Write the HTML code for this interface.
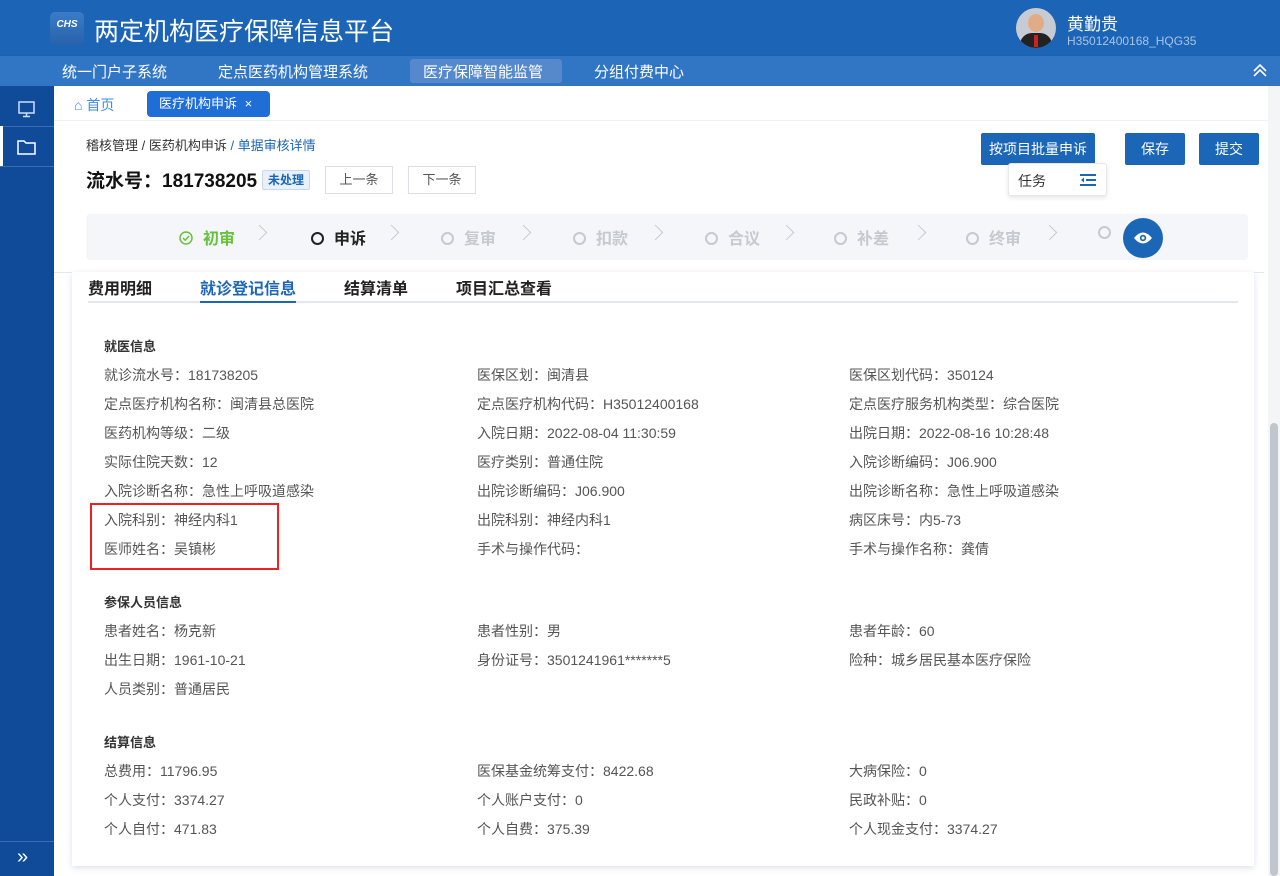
<!DOCTYPE html>
<html><head><meta charset="utf-8"><style>
*{margin:0;padding:0;box-sizing:border-box}
body{width:1280px;height:876px;overflow:hidden;font-family:"Liberation Sans","Noto Sans CJK SC",sans-serif;background:#fff;position:relative;color:#333}
.abs{position:absolute}
.hdr{left:0;top:0;width:1280px;height:56px;background:#1b64b6}
.nav{left:0;top:56px;width:1280px;height:30px;background:#3176c4;box-shadow:0 2px 3px rgba(0,0,0,.2)}
.nav span{position:absolute;top:5px;font-size:15px;color:#fff}
.side{left:0;top:86px;width:54px;height:790px;background:#0f4b98}
.tabs{left:54px;top:86px;width:1214px;height:35px;background:#fff;border-bottom:1px solid #eef0f4}
.btn{position:absolute;background:#1c66b8;color:#fff;font-size:14px;text-align:center;line-height:32px;height:32px;border-radius:2px}
.wb{position:absolute;border:1px solid #dcdfe6;font-size:13px;color:#555;text-align:center;height:28px;line-height:26px;width:68px;background:#fff}
.steps{left:86px;top:214px;width:1162px;height:46px;background:#f4f6fa;border-radius:4px}
.st{position:absolute;top:11px;font-size:16px;font-weight:bold;color:#c6c9cf}
.st i{display:inline-block;width:13px;height:13px;border:2px solid #c6c9cf;border-radius:50%;margin-right:10px;vertical-align:-1px}
.ch{position:absolute;top:13px;width:11px;height:11px;border-top:1px solid #c6c9cf;border-right:1px solid #c6c9cf;transform:rotate(45deg)}
.card{left:72px;top:272px;width:1182px;height:594px;background:#fff;box-shadow:0 2px 6px rgba(60,90,150,.18)}
.f{position:absolute;font-size:14px;color:#555;white-space:nowrap}
.h{position:absolute;font-size:13px;font-weight:bold;color:#333}
</style></head><body>
<div class="abs hdr">
 <div class="abs" style="left:50px;top:12px;width:34px;height:33px;border-radius:5px;background:linear-gradient(#3a7cc8,#2862aa);color:#fff;font-size:10px;font-weight:bold;font-style:italic;text-align:center;line-height:26px">CHS</div>
 <div class="abs" style="left:94px;top:12px;font-size:25px;color:#fff">两定机构医疗保障信息平台</div>
 <div class="abs" style="left:1016px;top:8px;width:40px;height:40px;border-radius:50%;background:#c8ccd2;overflow:hidden">
  <div class="abs" style="left:12px;top:6px;width:16px;height:18px;border-radius:50%;background:#e0ac86"></div>
  <div class="abs" style="left:4px;top:25px;width:32px;height:20px;border-radius:12px 12px 0 0;background:#222"></div>
  <div class="abs" style="left:18px;top:27px;width:4px;height:12px;background:#c22"></div>
 </div>
 <div class="abs" style="left:1067px;top:10px;font-size:17px;color:#fff">黄勤贵</div>
 <div class="abs" style="left:1067px;top:34px;font-size:12px;color:#a9c3e6">H35012400168_HQG35</div>
</div>
<div class="abs nav">
 <span style="left:62px">统一门户子系统</span>
 <span style="left:218px">定点医药机构管理系统</span>
 <div class="abs" style="left:410px;top:3px;width:152px;height:24px;background:#5589cc;border-radius:3px"></div>
 <span style="left:423px">医疗保障智能监管</span>
 <span style="left:594px">分组付费中心</span>
 <svg class="abs" style="left:1252px;top:6px" width="16" height="16" viewBox="0 0 16 16"><path d="M2 9 8 3 14 9M2 14 8 8 14 14" stroke="#fff" stroke-width="1.6" fill="none"/></svg>
</div>
<div class="abs side">
 <svg class="abs" style="left:17px;top:14px" width="20" height="18" viewBox="0 0 20 18"><rect x="2" y="2" width="15" height="11" stroke="#cfe0f5" stroke-width="1.5" fill="none"/><path d="M9.5 13v3M6 16.5h7" stroke="#cfe0f5" stroke-width="1.5"/></svg>
 <div class="abs" style="left:0;top:40px;width:54px;height:1px;background:#3b6cb0"></div>
 <div class="abs" style="left:0;top:40px;width:3px;height:40px;background:#fff"></div>
 <svg class="abs" style="left:17px;top:53px" width="20" height="16" viewBox="0 0 20 16"><path d="M1 2h6l2 2h9v11H1z" stroke="#fff" stroke-width="1.5" fill="none"/></svg>
 <div class="abs" style="left:0;top:80px;width:54px;height:1px;background:#3b6cb0"></div>
 <div class="abs" style="left:0;top:755px;width:54px;height:1px;background:#3b6cb0"></div>
 <div class="abs" style="left:17px;top:760px;color:#fff;font-size:20px">»</div>
</div>
<div class="abs tabs">
 <div class="abs" style="left:20px;top:9px;font-size:14px;color:#3a8ee6">⌂ 首页</div>
 <div class="abs" style="left:93px;top:5px;width:123px;height:26px;background:#1f6ed8;border-radius:4px;color:#fff;font-size:13px;line-height:26px;padding-left:12px">医疗机构申诉 <span style="margin-left:4px">×</span></div>
</div>
<div class="abs" style="left:54px;top:121px;width:1214px;height:755px;background:#fff"></div>
<div class="abs" style="left:86px;top:135px;font-size:13px;color:#333">稽核管理 / 医药机构申诉 <span style="color:#1c66b8">/ 单据审核详情</span></div>
<div class="abs" style="left:86px;top:166px;font-size:19px;font-weight:bold;color:#111">流水号：181738205</div>
<div class="abs" style="left:262px;top:170px;width:48px;height:20px;background:#e8f0fa;border:1px solid #c8d9ef;border-radius:2px;font-size:12px;font-weight:bold;color:#1c66b8;text-align:center;line-height:18px">未处理</div>
<div class="wb" style="left:325px;top:166px">上一条</div>
<div class="wb" style="left:408px;top:166px">下一条</div>
<div class="btn" style="left:981px;top:133px;width:114px">按项目批量申诉</div>
<div class="btn" style="left:1125px;top:133px;width:60px">保存</div>
<div class="btn" style="left:1199px;top:133px;width:60px">提交</div>
<div class="abs" style="left:1008px;top:163px;width:99px;height:33px;background:#fff;border:1px solid #e6e8ec;border-radius:3px;box-shadow:0 2px 5px rgba(0,0,0,.1)">
 <span class="abs" style="left:9px;top:7px;font-size:14px;color:#333">任务</span>
 <svg class="abs" style="left:71px;top:10px" width="16" height="12" viewBox="0 0 16 12"><path d="M0 1h16M6 6h10M0 11h16" stroke="#1c66b8" stroke-width="2"/><path d="M4 3.5 1 6l3 2.5z" fill="#1c66b8"/></svg>
</div>
<div class="abs steps">
 <div class="st" style="left:93px;color:#67c23a"><svg width="14" height="14" viewBox="0 0 14 14" style="margin-right:10px;vertical-align:-1px"><circle cx="7" cy="7" r="6" stroke="#67c23a" stroke-width="1.5" fill="none"/><path d="M4 7l2.2 2.2L10 5" stroke="#67c23a" stroke-width="1.5" fill="none"/></svg>初审</div>
 <div class="ch" style="left:168px"></div>
 <div class="st" style="left:225px;color:#222"><i style="border-color:#222"></i>申诉</div>
 <div class="ch" style="left:300px"></div>
 <div class="st" style="left:355px"><i></i>复审</div>
 <div class="ch" style="left:432px"></div>
 <div class="st" style="left:487px"><i></i>扣款</div>
 <div class="ch" style="left:564px"></div>
 <div class="st" style="left:619px"><i></i>合议</div>
 <div class="ch" style="left:695px"></div>
 <div class="st" style="left:748px"><i></i>补差</div>
 <div class="ch" style="left:827px"></div>
 <div class="st" style="left:880px"><i></i>终审</div>
 <div class="ch" style="left:958px"></div>
 <div class="st" style="left:1012px"><i></i></div>
 <div class="abs" style="left:1037px;top:4px;width:40px;height:40px;border-radius:50%;background:#1c66b8">
  <svg class="abs" style="left:10px;top:12px" width="20" height="16" viewBox="0 0 20 16"><path d="M1 8Q10-3 19 8Q10 19 1 8z" fill="#fff"/><circle cx="10" cy="8" r="3.2" fill="#1c66b8"/><circle cx="10" cy="8" r="1.5" fill="#fff"/></svg>
 </div>
</div>
<div class="abs" style="left:54px;top:272px;width:1210px;height:1px;background:#e4e7ed"></div>
<div class="abs card">
 <div class="abs" style="left:16px;top:29px;width:1150px;height:2px;background:#e4e7ed"></div>
 <div class="abs" style="left:16px;top:3px;font-size:16px;font-weight:bold;color:#222">费用明细</div>
 <div class="abs" style="left:128px;top:3px;font-size:16px;font-weight:bold;color:#1c66b8">就诊登记信息</div>
 <div class="abs" style="left:128px;top:29px;width:96px;height:2px;background:#1c66b8"></div>
 <div class="abs" style="left:272px;top:3px;font-size:16px;font-weight:bold;color:#222">结算清单</div>
 <div class="abs" style="left:384px;top:3px;font-size:16px;font-weight:bold;color:#222">项目汇总查看</div>
 <div class="h" style="left:32px;top:64px">就医信息</div>
 <div class="f" style="left:32px;top:93px">就诊流水号：181738205</div>
 <div class="f" style="left:405px;top:93px">医保区划：闽清县</div>
 <div class="f" style="left:777px;top:93px">医保区划代码：350124</div>
 <div class="f" style="left:32px;top:122px">定点医疗机构名称：闽清县总医院</div>
 <div class="f" style="left:405px;top:122px">定点医疗机构代码：H35012400168</div>
 <div class="f" style="left:777px;top:122px">定点医疗服务机构类型：综合医院</div>
 <div class="f" style="left:32px;top:151px">医药机构等级：二级</div>
 <div class="f" style="left:405px;top:151px">入院日期：2022-08-04 11:30:59</div>
 <div class="f" style="left:777px;top:151px">出院日期：2022-08-16 10:28:48</div>
 <div class="f" style="left:32px;top:180px">实际住院天数：12</div>
 <div class="f" style="left:405px;top:180px">医疗类别：普通住院</div>
 <div class="f" style="left:777px;top:180px">入院诊断编码：J06.900</div>
 <div class="f" style="left:32px;top:209px">入院诊断名称：急性上呼吸道感染</div>
 <div class="f" style="left:405px;top:209px">出院诊断编码：J06.900</div>
 <div class="f" style="left:777px;top:209px">出院诊断名称：急性上呼吸道感染</div>
 <div class="f" style="left:32px;top:238px">入院科别：神经内科1</div>
 <div class="f" style="left:405px;top:238px">出院科别：神经内科1</div>
 <div class="f" style="left:777px;top:238px">病区床号：内5-73</div>
 <div class="f" style="left:32px;top:267px">医师姓名：吴镇彬</div>
 <div class="f" style="left:405px;top:267px">手术与操作代码：</div>
 <div class="f" style="left:777px;top:267px">手术与操作名称：龚倩</div>
 <div class="abs" style="left:18px;top:231px;width:189px;height:67px;border:2px solid #e22"></div>
 <div class="h" style="left:32px;top:320px">参保人员信息</div>
 <div class="f" style="left:32px;top:349px">患者姓名：杨克新</div>
 <div class="f" style="left:405px;top:349px">患者性别：男</div>
 <div class="f" style="left:777px;top:349px">患者年龄：60</div>
 <div class="f" style="left:32px;top:378px">出生日期：1961-10-21</div>
 <div class="f" style="left:405px;top:378px">身份证号：3501241961*******5</div>
 <div class="f" style="left:777px;top:378px">险种：城乡居民基本医疗保险</div>
 <div class="f" style="left:32px;top:407px">人员类别：普通居民</div>
 <div class="h" style="left:32px;top:460px">结算信息</div>
 <div class="f" style="left:32px;top:489px">总费用：11796.95</div>
 <div class="f" style="left:405px;top:489px">医保基金统筹支付：8422.68</div>
 <div class="f" style="left:777px;top:489px">大病保险：0</div>
 <div class="f" style="left:32px;top:518px">个人支付：3374.27</div>
 <div class="f" style="left:405px;top:518px">个人账户支付：0</div>
 <div class="f" style="left:777px;top:518px">民政补贴：0</div>
 <div class="f" style="left:32px;top:547px">个人自付：471.83</div>
 <div class="f" style="left:405px;top:547px">个人自费：375.39</div>
 <div class="f" style="left:777px;top:547px">个人现金支付：3374.27</div>
</div>
<div class="abs" style="left:1268px;top:86px;width:12px;height:790px;background:#f4f5f7"></div>
<div class="abs" style="left:1270px;top:423px;width:8px;height:453px;background:#c1c5cd;border-radius:4px"></div>
</body></html>
